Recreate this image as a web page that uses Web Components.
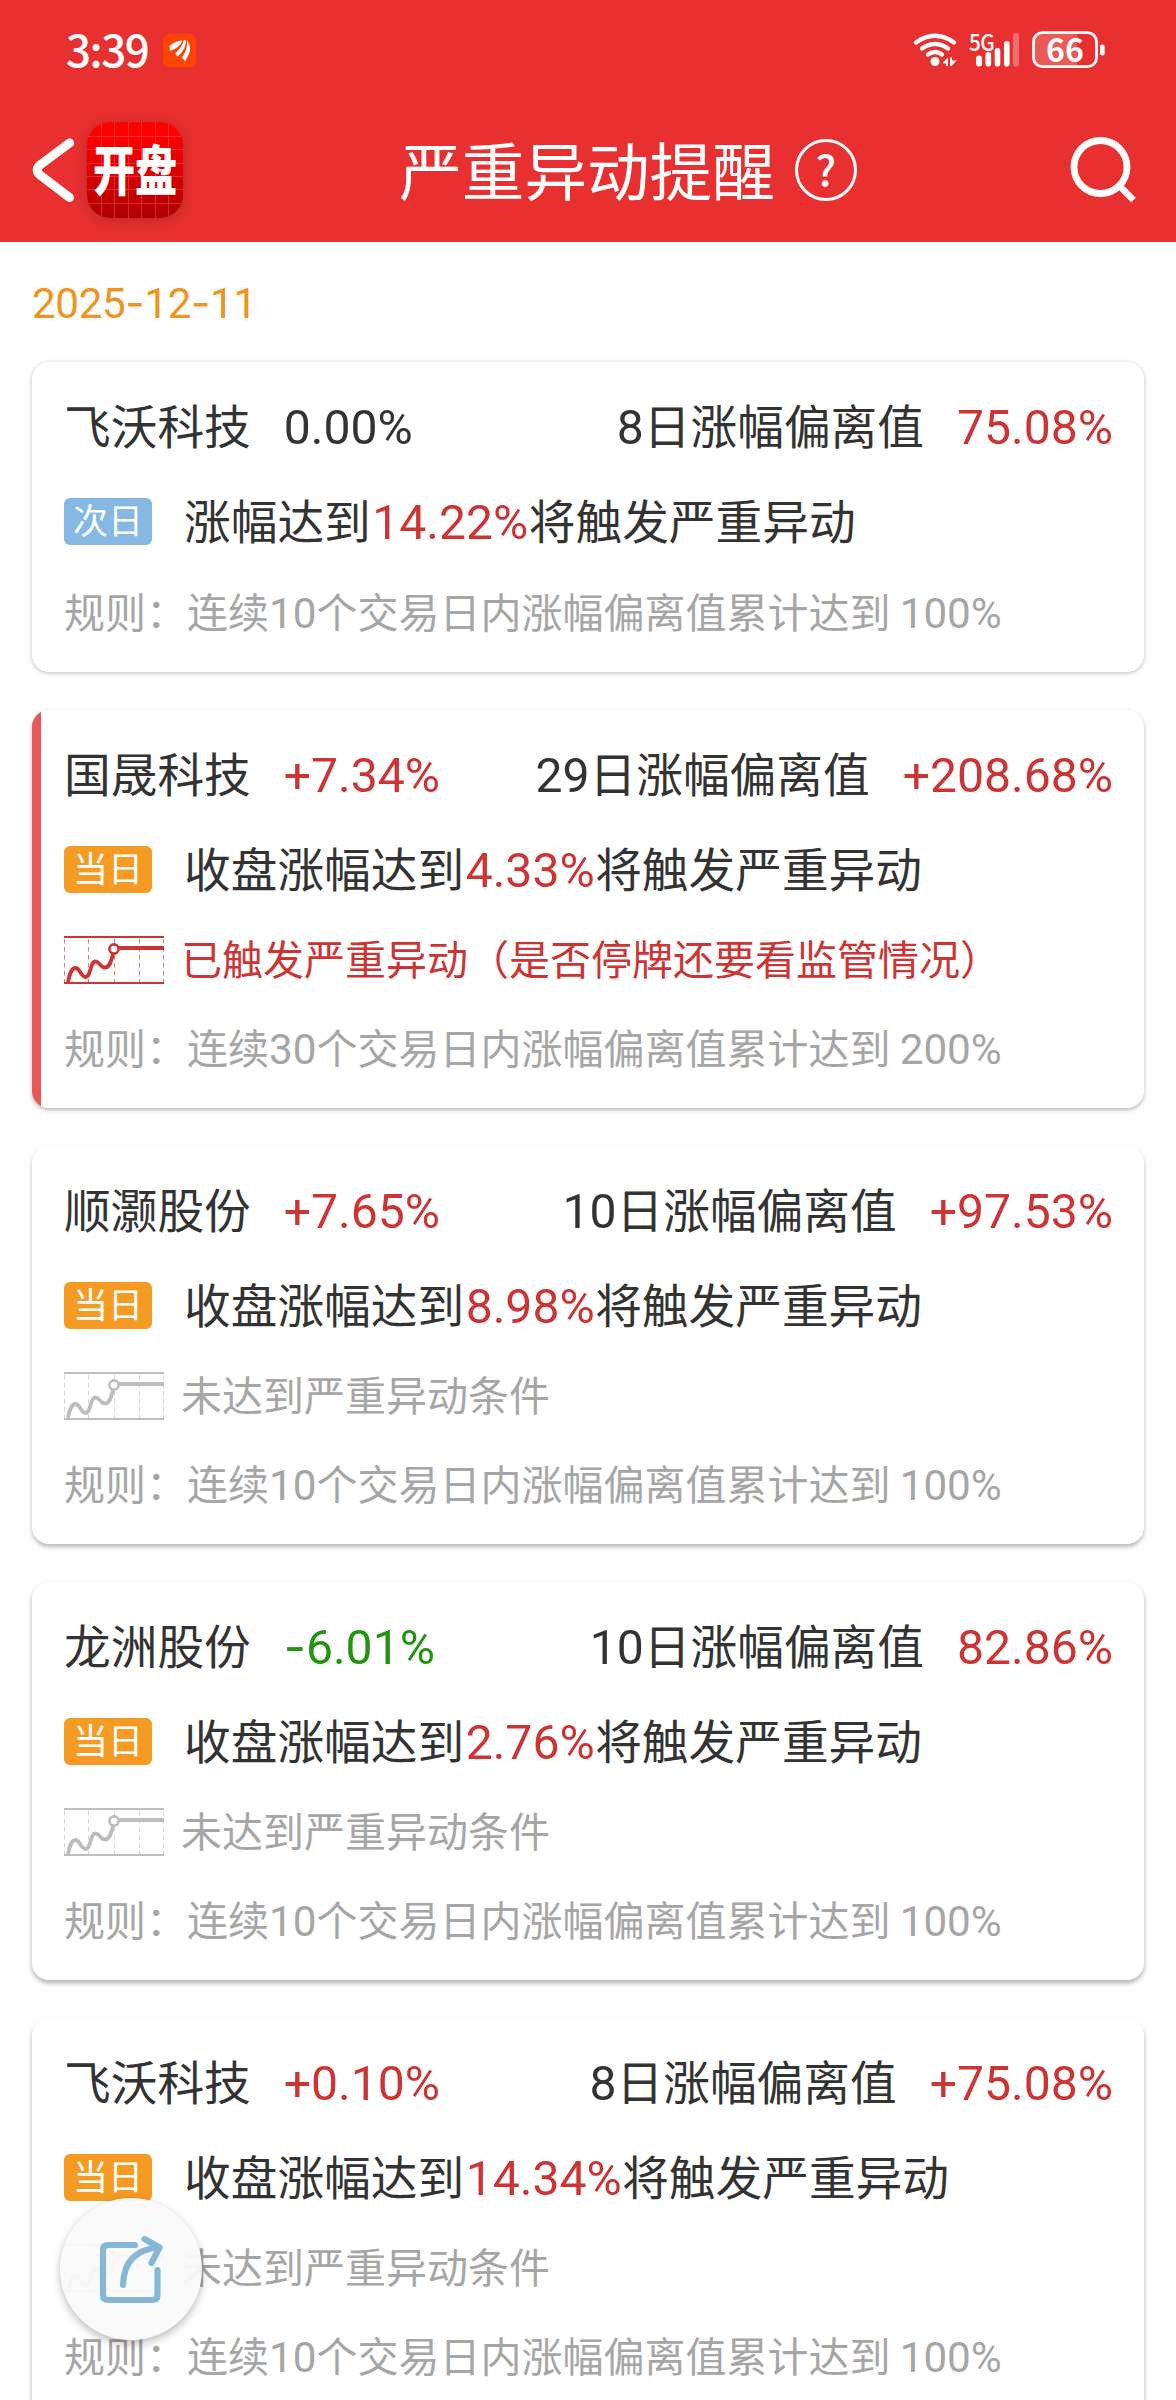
<!DOCTYPE html>
<html lang="zh-CN">
<head>
<meta charset="utf-8">
<meta name="viewport" content="width=device-width, initial-scale=1">
<title>严重异动提醒</title>
<style>
  body {
    margin: 0;
    height: 2400px;
    overflow: hidden;
    background-color: #fefefe;
    color: #333;
    font-family: "Noto Sans CJK SC", sans-serif;
  }
</style>
</head>
<body>
<alert-page date="2025-12-11">
  <status-bar slot="header" time="3:39" battery="66"></status-bar>
  <nav-bar slot="header">严重异动提醒</nav-bar>

  <stock-card name="飞沃科技" change="0.00%" days="8" deviation="75.08%" when="次日" rule="连续10个交易日内涨幅偏离值累计达到 100%" style="--shade: 0 1px 4px rgba(0, 0, 0, 0.26)">
    涨幅达到<b>14.22%</b>将触发严重异动
  </stock-card>
  <stock-card name="国晟科技" change="+7.34%" days="29" deviation="+208.68%" when="当日" status="已触发严重异动（是否停牌还要看监管情况）" triggered rule="连续30个交易日内涨幅偏离值累计达到 200%" style="--shade: 0 2px 4px rgba(0, 0, 0, 0.27)">
    收盘涨幅达到<b>4.33%</b>将触发严重异动
  </stock-card>
  <stock-card name="顺灏股份" change="+7.65%" days="10" deviation="+97.53%" when="当日" status="未达到严重异动条件" rule="连续10个交易日内涨幅偏离值累计达到 100%" style="--shade: 0 3px 4px rgba(0, 0, 0, 0.27)">
    收盘涨幅达到<b>8.98%</b>将触发严重异动
  </stock-card>
  <stock-card name="龙洲股份" change="-6.01%" days="10" deviation="82.86%" when="当日" status="未达到严重异动条件" rule="连续10个交易日内涨幅偏离值累计达到 100%" style="--shade: 0 3px 5px rgba(0, 0, 0, 0.3)">
    收盘涨幅达到<b>2.76%</b>将触发严重异动
  </stock-card>
  <stock-card name="飞沃科技" change="+0.10%" days="8" deviation="+75.08%" when="当日" status="未达到严重异动条件" rule="连续10个交易日内涨幅偏离值累计达到 100%" style="--shade: 0 4px 5px rgba(0, 0, 0, 0.3)">
    收盘涨幅达到<b>14.34%</b>将触发严重异动
  </stock-card>

  <share-button slot="float"></share-button>
</alert-page>

<script>
// Digits are set in Roboto, the hyphen in Inter where it is wider
const numStyle = `
      .num {
        font-family: Roboto, sans-serif;
        font-size: 1.03em;
        line-height: 0;
      }

      .dash {
        font-family: Inter, sans-serif;
      }
`;

const num = (text) => text.replace(/[\d.+%-]+/g, (m) => (
  `<span class="num">${m.replace(/-/g, '<span class="dash">-</span>')}</span>`
));

class StatusBar extends HTMLElement {
  constructor() {
    super();
    this.shadowDOM = this.attachShadow({ mode: 'open' });
  }

  connectedCallback() {
    this.render();
  }

  render() {
    this.shadowDOM.innerHTML = `
      <style>
      :host {
        display: flex;
        align-items: center;
        height: 100px;
        padding: 0 71px 0 66px;
        color: white;
      }

      .time {
        font-size: 44px;
        font-weight: 500;
        line-height: 60px;
        padding-bottom: 5px;
        letter-spacing: -1.500px;
      }

      .app {
        margin-left: 15px;
      }

      .wifi {
        margin-left: auto;
      }

      .signal {
        position: relative;
        margin-left: 11px;
      }

      .signal span {
        position: absolute;
        left: 0;
        top: -6px;
        font-size: 23px;
        font-weight: 500;
        line-height: 30px;
        letter-spacing: -0.500px;
        transform: scaleX(0.9);
        transform-origin: left;
      }

      .battery {
        position: relative;
        margin-left: 11px;
      }

      .battery span {
        position: absolute;
        left: 0;
        top: -5px;
        width: 66px;
        font-size: 32px;
        font-weight: 700;
        line-height: 44px;
        text-align: center;
      }

      svg {
        display: block;
      }
      </style>

      <span class="time">${this.getAttribute('time')}</span>
      <svg class="app" width="33" height="33" viewBox="0 0 33 33">
        <rect width="33" height="33" rx="6" fill="#ff4400"/>
        <g fill="white">
          <path d="M6.500 12Q13 6.500 19.500 6.500Q17 13.500 7 17Z"/>
          <path d="M12 19.500Q19.500 13 20.500 6.500L23 6Q23.500 15 14.500 22.500Z"/>
          <path d="M19 23.500Q25 15 24 6Q29 14 26 20L22 27.500Z"/>
        </g>
      </svg>
      <svg class="wifi" width="45" height="36" viewBox="0 0 45 36">
        <g fill="none" stroke="white" stroke-width="4.200" stroke-linecap="round">
          <path d="M3 10.500Q22 -3 41 10.500"/>
          <path d="M9 16.500Q22 7.500 35 16.500"/>
          <path d="M15 22.500Q22 17.500 29 22.500"/>
        </g>
        <circle cx="22" cy="29.500" r="4.500" fill="white"/>
        <path d="M30 30.500L35 25.500V34H33V31.500H30ZM37 25.500H39V28.500H43.500L38.500 34H37Z" fill="white"/>
      </svg>
      <div class="signal">
        <svg width="52" height="36" viewBox="0 0 52 36" fill="white">
          <rect x="7" y="23.500" width="6" height="11" rx="3"/>
          <rect x="16.500" y="20" width="5.600" height="14.500" rx="2.800"/>
          <rect x="25.700" y="16" width="5.600" height="18.500" rx="2.800"/>
          <rect x="35" y="9" width="5.600" height="25.500" rx="2.800"/>
          <rect x="44" y="1" width="6" height="33.500" rx="2.800" opacity="0.3"/>
        </svg>
        <span>5G</span>
      </div>
      <div class="battery">
        <svg width="73" height="38" viewBox="0 0 73 38">
          <path d="M45 2H11Q1.500 2 1.500 11V27Q1.500 36 11 36H45Z" fill="white" opacity="0.2"/>
          <rect x="1.500" y="1.700" width="63" height="34" rx="9" fill="none" stroke="white" stroke-width="2.800"/>
          <rect x="68" y="13.500" width="4.700" height="11" rx="2.200" fill="white"/>
        </svg>
        <span>${this.getAttribute('battery')}</span>
      </div>
     `;
  }
}

class NavBar extends HTMLElement {
  constructor() {
    super();
    this.shadowDOM = this.attachShadow({ mode: 'open' });
  }

  connectedCallback() {
    this.render();
  }

  render() {
    this.shadowDOM.innerHTML = `
      <style>
      :host {
        display: grid;
        grid-template-columns: 1fr auto 1fr;
        align-items: center;
        height: 142px;
        padding: 0 39px 2px 30px;
        box-sizing: border-box;
        color: white;
      }

      .left {
        display: flex;
        align-items: center;
        gap: 10px;
      }

      .logo {
        display: grid;
        place-items: center;
        width: 96px;
        height: 96px;
        border-radius: 23px;
        background: linear-gradient(#ff0000 15%, #ae0000);
        box-shadow: 0 2px 12px rgba(90, 20, 20, 0.3);
      }

      .logo > * {
        grid-area: 1 / 1;
      }

      .logo span {
        font-size: 54px;
        font-weight: 900;
        line-height: 80px;
        padding-bottom: 5px;
        margin: 0 -10px;
        white-space: nowrap;
        transform: scaleX(0.78);
      }

      .title {
        display: flex;
        align-items: center;
        gap: 20px;
        margin-left: 89px;
      }

      h1 {
        margin: 0;
        padding-bottom: 5px;
        font-size: 62.600px;
        font-weight: 400;
        line-height: 90px;
      }

      .help {
        display: flex;
        align-items: center;
        justify-content: center;
        box-sizing: border-box;
        width: 62px;
        height: 62px;
        border: 3px solid white;
        border-radius: 50%;
        font-size: 42px;
        font-weight: 500;
        line-height: 50px;
      }

      .help span {
        padding-bottom: 4px;
      }

      .search {
        justify-self: end;
      }

      svg {
        display: block;
      }
      </style>

      <div class="left">
        <svg width="47" height="68" viewBox="0 0 47 68">
          <path d="M39.500 7L10 29Q4.500 34 10 39L39.500 61.500" fill="none" stroke="white" stroke-width="9" stroke-linecap="round" stroke-linejoin="round"/>
        </svg>
        <div class="logo">
          <svg width="96" height="96" viewBox="0 0 96 96">
            <path d="M14.500 2V94M27.500 0V96M41.500 0V96M54.500 0V96M68.500 0V96M81.500 2V94M2 14.500H94M0 27.500H96M0 41.500H96M0 54.500H96M0 67.500H96M2 81.500H94" stroke="#ff8080" stroke-width="1" opacity="0.35"/>
          </svg>
          <span>开盘</span>
        </div>
      </div>
      <div class="title">
        <h1><slot></slot></h1>
        <div class="help"><span>?</span></div>
      </div>
      <svg class="search" width="68" height="68" viewBox="0 0 68 68">
        <circle cx="31.500" cy="31" r="26.500" fill="none" stroke="white" stroke-width="6.800"/>
        <path d="M51 50.500L64.500 64" stroke="white" stroke-width="6.500"/>
      </svg>
     `;
  }
}

// Small price line that runs along its ceiling, inherits its colour
class TrendIcon extends HTMLElement {
  constructor() {
    super();
    this.shadowDOM = this.attachShadow({ mode: 'open' });
  }

  connectedCallback() {
    this.shadowDOM.innerHTML = `
      <style>
      :host {
        display: block;
        width: 100px;
        height: 48px;
      }

      svg {
        display: block;
      }
      </style>

      <svg width="100" height="48" viewBox="0 0 100 48" fill="none" stroke="currentColor">
        <path d="M0 1H100M0 47H100" stroke-width="2"/>
        <path d="M0.500 3V46M24.500 3V46M50.500 3V46M75.500 3V46M99.500 3V46" stroke-width="1" stroke-dasharray="4.500 3.500" opacity="0.65"/>
        <path d="M4 46C6 36 8 32 11.500 32C16 32 17 41 21.500 41C27 41 26 25.500 31.500 25.500C36 25.500 36 31.500 41 31.500C46 31.500 47 25 49 18" stroke-width="3.800"/>
        <path d="M54 12H100" stroke-width="4"/>
        <circle cx="50" cy="13" r="4.600" fill="white" stroke-width="2.600"/>
      </svg>
     `;
  }
}

class StockCard extends HTMLElement {
  constructor() {
    super();
    this.shadowDOM = this.attachShadow({ mode: 'open' });
  }

  connectedCallback() {
    this.render();
  }

  tone(value) {
    if (value.startsWith('+')) return 'up';
    if (value.startsWith('-')) return 'down';
    return '';
  }

  render() {
    const change = this.getAttribute('change');
    const when = this.getAttribute('when');
    const status = this.getAttribute('status');

    this.shadowDOM.innerHTML = `
      <style>
      ${numStyle}
      :host {
        display: block;
        box-sizing: border-box;
        height: 398px;
        padding: 34px 31px 0 32px;
        border-radius: 17px;
        background-color: white;
        box-shadow: var(--shade);
        font-size: 46.700px;
      }

      :host(:not([status])) {
        height: 310px;
      }

      :host([triggered]) {
        background-image: linear-gradient(90deg, #e9575a 9px, transparent 9px);
      }

      .row {
        display: flex;
        align-items: center;
        height: 60px;
        white-space: nowrap;
      }

      .row > span {
        line-height: 55px;
        padding-bottom: 5px;
      }

      .head {
        gap: 33px;
      }

      .label {
        margin-left: auto;
      }

      .trigger {
        gap: 32px;
        margin-top: 35px;
      }

      .row > .when {
        width: 88px;
        height: 47px;
        box-sizing: border-box;
        border-radius: 6px;
        background-color: ${when === '当日' ? '#f59a23' : '#86b8e4'};
        color: white;
        font-size: 35px;
        line-height: 42px;
        text-align: center;
      }

      .status, .rule {
        font-size: 41px;
        color: #a6a6a6;
      }

      .status {
        gap: 17px;
        margin-top: 31px;
      }

      .status trend-icon {
        color: #bdbdbd;
      }

      :host([triggered]) .status,
      :host([triggered]) trend-icon {
        color: #cd3535;
      }

      .rule {
        margin-top: ${status ? 29 : 32}px;
      }

      .up, .deviation, ::slotted(b) {
        color: #cd3535;
      }

      .down {
        color: #22940f;
      }

      ::slotted(b) {
        margin: 0 0.500px 0 1.500px;
        font-family: Roboto, sans-serif;
        font-size: 1.03em;
        font-weight: 400;
        line-height: 0;
      }
      </style>

      <div class="row head">
        <span>${this.getAttribute('name')}</span>
        <span class="${this.tone(change)}">${num(change)}</span>
        <span class="label">${num(this.getAttribute('days'))}日涨幅偏离值</span>
        <span class="deviation">${num(this.getAttribute('deviation'))}</span>
      </div>
      <div class="row trigger">
        <span class="when">${when}</span>
        <span><slot></slot></span>
      </div>
      ${status ? `<div class="row status"><trend-icon></trend-icon><span>${status}</span></div>` : ''}
      <div class="row rule"><span>规则：${num(this.getAttribute('rule'))}</span></div>
     `;
  }
}

class ShareButton extends HTMLElement {
  constructor() {
    super();
    this.shadowDOM = this.attachShadow({ mode: 'open' });
  }

  connectedCallback() {
    this.shadowDOM.innerHTML = `
      <style>
      :host {
        display: block;
        width: 142px;
        height: 142px;
        border-radius: 50%;
        background-color: rgba(250, 250, 250, 0.94);
        box-shadow: 0 4px 8px rgba(0, 0, 0, 0.25), 0 0 2px rgba(0, 0, 0, 0.1);
      }

      svg {
        display: block;
      }
      </style>

      <svg width="142" height="142" viewBox="0 0 142 142" fill="none" stroke="#86b8d6" stroke-width="6.200" stroke-linecap="round" stroke-linejoin="round">
        <path d="M75 47H48Q43 47 43 52V97Q43 102 48 102H92.500Q97.500 102 97.500 97V72"/>
        <path d="M63 87Q64 52 99 49.500M84.500 41L99.500 49.500L91.500 65"/>
      </svg>
     `;
  }
}

class AlertPage extends HTMLElement {
  constructor() {
    super();
    this.shadowDOM = this.attachShadow({ mode: 'open' });
  }

  connectedCallback() {
    this.shadowDOM.innerHTML = `
      <style>
      ${numStyle}
      :host {
        display: block;
        position: relative;
        width: 1176px;
        height: 2400px;
        overflow: hidden;
      }

      header {
        height: 242px;
        background-color: #e83030;
      }

      time {
        display: block;
        height: 120px;
        box-sizing: border-box;
        padding: 28px 32px 0;
        font-size: 41px;
        line-height: 60px;
        letter-spacing: -0.400px;
        color: #ee9420;
      }

      .list {
        display: flex;
        flex-direction: column;
        gap: 38px;
        padding: 0 32px;
      }

      .float {
        position: absolute;
        left: 60px;
        top: 2198px;
      }
      </style>

      <header><slot name="header"></slot></header>
      <time>${num(this.getAttribute('date'))}</time>
      <div class="list"><slot></slot></div>
      <div class="float"><slot name="float"></slot></div>
     `;
  }
}

customElements.define('status-bar', StatusBar);
customElements.define('nav-bar', NavBar);
customElements.define('trend-icon', TrendIcon);
customElements.define('stock-card', StockCard);
customElements.define('share-button', ShareButton);
customElements.define('alert-page', AlertPage);
</script>
</body>
</html>
